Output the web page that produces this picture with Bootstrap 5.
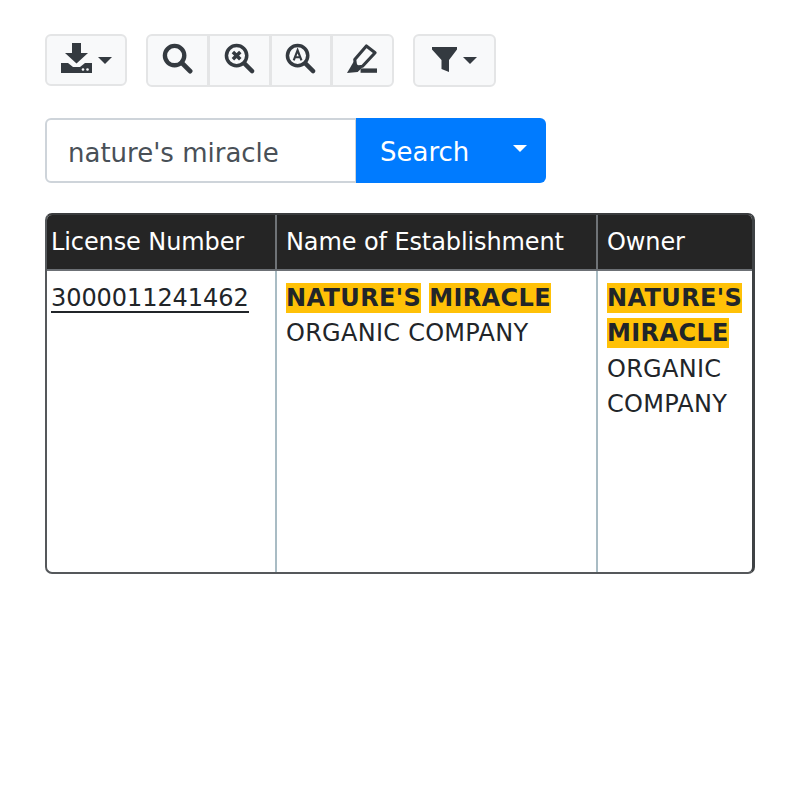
<!DOCTYPE html>
<html lang="en">
<head>
  <meta charset="UTF-8" />
  <meta name="viewport" content="width=device-width, initial-scale=1.0"/>
  <title>License Search</title>
  <link href="https://cdn.jsdelivr.net/npm/bootstrap@5.3.0/dist/css/bootstrap.min.css" rel="stylesheet">
  <style>
    body { font-family: "DejaVu Sans", sans-serif; font-size: 24px; color: #212529; }
    .page-wrap { padding: 34px 45px 0; }
    .tool-row { gap: 19px; margin-bottom: 31px; }
    .tool-btn { background: #f8f9fa; border: 2px solid #e4e5e6; color: #343a40; height: 53px; width: 62.750px; padding: 0 0 4px; border-radius: 6px; display: flex; align-items: center; justify-content: center; }
    .tool-btn.with-caret { width: 83px; gap: 6px; height: 53px; }
    .tool-btn.tool-download { width: 82px; height: 52px; }
    .caret-down { display: inline-block; width: 0; height: 0; border-left: 7px solid transparent; border-right: 7px solid transparent; border-top: 7px solid currentColor; }
    .tool-btn .caret-down { margin-top: 4px; }
    .tool-btn .filter-glyph { margin-top: 2px; }
    .search-row { width: 501px; height: 65px; margin-bottom: 30px; }
    .search-row .form-control { font-size: 26px; padding: 5px 21px 0; color: #495057; border: 2px solid #ced4da; border-radius: 6px 0 0 6px; height: 65px; box-shadow: none; }
    .search-btn { width: 190px; background: #007bff; border: 0; color: #fff; font-size: 26px; border-radius: 0 6px 6px 0; height: 65px; padding: 3px 19px 0 24px; display: flex; align-items: center; justify-content: space-between; }
    .search-btn .caret-down { margin: -8px 0 0 0; border-left-width: 7.5px; border-right-width: 7.5px; border-top-width: 7.5px; }
    .table-frame { width: 710px; height: 361px; border: 2px solid #55585b; border-top-color: #3a3c3e; border-right: 3px solid #3f4245; border-radius: 7px; overflow: hidden; }
    .table-frame .table { margin: 0; height: 100%; table-layout: fixed; width: 705px; font-size: 24px; border-collapse: collapse; }
    .table-frame th { background: #252525; color: #fff; font-weight: 400; height: 55px; padding: 8px 6px 8px 4px; line-height: 36px; border: 0; border-bottom: 2px solid #6c7075; vertical-align: middle; box-shadow: none; letter-spacing: -.1px; }
    .table-frame th + th, .table-frame td + td { border-left: 2px solid #a9bcc4; padding-left: 9px; }
    .table-frame th + th { border-left-color: #6f7377; }
    .table-frame td { padding: 9.500px 6px 9px 4px; line-height: 35.600px; border: 0; vertical-align: top; color: #212529; box-shadow: none; }
    .org-name { letter-spacing: .27px; }
    .license-link { color: #212529; text-decoration: none; border-bottom: 2px solid #212529; display: inline-block; line-height: 25px; letter-spacing: -.07px; }
    .hit { background: #ffc107; color: #212529; font-weight: 700; padding: 1px 0; letter-spacing: .38px; }
  </style>
</head>
<body>
  <div class="page-wrap">

    <!-- Toolbar -->
    <div class="d-flex tool-row">
      <button type="button" class="btn tool-btn with-caret tool-download" aria-label="Download">
        <svg width="31" height="30" viewBox="0 0 31 30" fill="currentColor"><path d="M11 0h9v10h7L15.500 20.500 4 10h7z"/><path d="M0 20h7l5 4h7l5-4h7v10H0z"/><circle cx="22" cy="26.500" r="1.300" fill="#f8f9fa"/><circle cx="26.500" cy="26.500" r="1.300" fill="#f8f9fa"/></svg>
        <span class="caret-down"></span>
      </button>

      <div class="btn-group">
        <button type="button" class="btn tool-btn" aria-label="Search">
          <svg width="31" height="31" viewBox="0 0 32 32" fill="none" stroke="currentColor"><circle cx="13" cy="13" r="10" stroke-width="4.500"/><path d="M20.500 20.500 29 29" stroke-width="5" stroke-linecap="round"/></svg>
        </button>
        <button type="button" class="btn tool-btn" aria-label="Search exact">
          <svg width="31" height="31" viewBox="0 0 32 32" fill="none" stroke="currentColor"><circle cx="13" cy="13" r="10.500" stroke-width="3.600"/><path d="M21 21 29 29" stroke-width="4.500" stroke-linecap="round"/><path d="m9.200 9.200 7.600 7.600M16.800 9.200l-7.600 7.600" stroke-width="3.600"/></svg>
        </button>
        <button type="button" class="btn tool-btn" aria-label="Search text">
          <svg width="31" height="31" viewBox="0 0 32 32" fill="none" stroke="currentColor"><circle cx="13" cy="13" r="10.500" stroke-width="3.600"/><path d="M21 21 29 29" stroke-width="4.500" stroke-linecap="round"/><path d="m9 18 4-10.500L17 18M10.200 14.700h5.600" stroke-width="2.200"/></svg>
        </button>
        <button type="button" class="btn tool-btn" aria-label="Highlight">
          <svg width="31" height="31" viewBox="0 0 32 32" fill="none" stroke="currentColor"><path d="M8 17 20 3l9 7L16 24l-7 1z" stroke-width="3.200" stroke-linejoin="round"/><path d="M7 19 0 31l11-1 4-4z" fill="currentColor" stroke="none"/><path d="M14 28.500h17" stroke-width="4.500"/></svg>
        </button>
      </div>

      <button type="button" class="btn tool-btn with-caret" aria-label="Filter">
        <svg class="filter-glyph" width="25" height="26" viewBox="0 0 25 26" fill="currentColor"><path d="M0 0h25v2.500L17 13v12l-7.500-3V13L0 2.500z"/></svg>
        <span class="caret-down"></span>
      </button>
    </div>

    <!-- Search box -->
    <div class="input-group search-row">
      <input type="text" class="form-control" value="nature's miracle" aria-label="Search">
      <button type="button" class="btn search-btn">Search <span class="caret-down"></span></button>
    </div>

    <!-- Results -->
    <div class="table-frame">
      <table class="table">
        <thead>
          <tr>
            <th scope="col" style="width:229px">License Number</th>
            <th scope="col" style="width:321px">Name of Establishment</th>
            <th scope="col">Owner</th>
          </tr>
        </thead>
        <tbody>
          <tr>
            <td><a href="#" class="license-link">3000011241462</a></td>
            <td class="org-name"><span class="hit">NATURE'S</span> <span class="hit">MIRACLE</span> ORGANIC COMPANY</td>
            <td class="org-name"><span class="hit">NATURE'S</span> <span class="hit">MIRACLE</span> ORGANIC COMPANY</td>
          </tr>
        </tbody>
      </table>
    </div>
  </div>

  <script src="https://cdn.jsdelivr.net/npm/bootstrap@5.3.0/dist/js/bootstrap.bundle.min.js"></script>
</body>
</html>
